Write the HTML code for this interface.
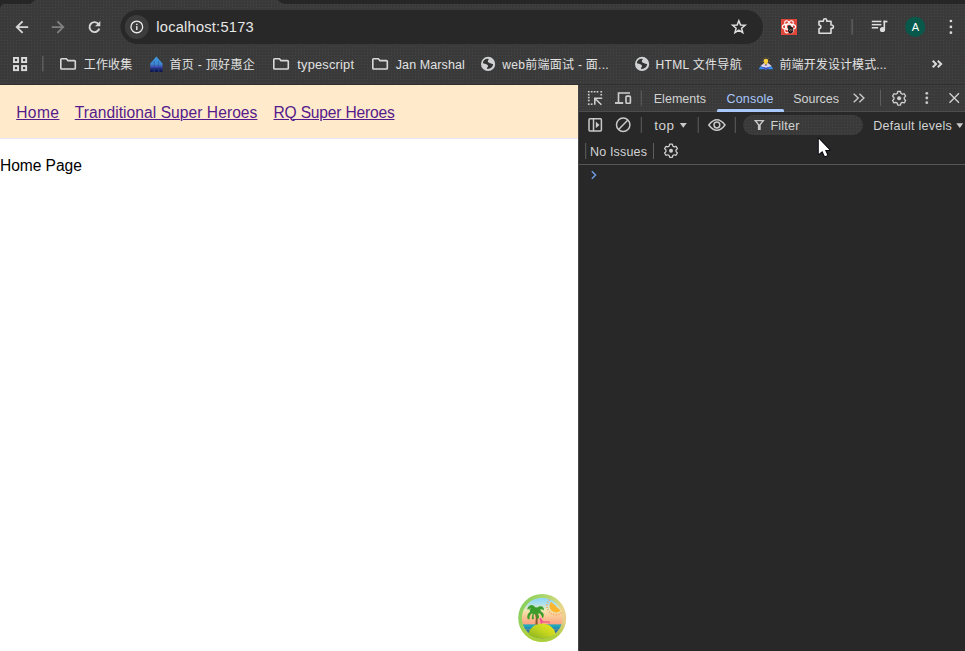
<!DOCTYPE html>
<html lang="zh-CN">
<head>
<meta charset="utf-8">
<title>localhost:5173</title>
<style>
*{box-sizing:border-box;margin:0;padding:0}
html,body{width:965px;height:651px;overflow:hidden;background:#3c3c3c;font-family:"Liberation Sans","Noto Sans CJK SC",sans-serif}
#root{position:relative;width:965px;height:651px;overflow:hidden;background:#3c3c3c}
#root>*{position:absolute}
.t{line-height:20px;white-space:nowrap;display:block}
a.lnk{text-decoration:underline;text-decoration-thickness:1px;text-underline-offset:1.2px;cursor:pointer}
#bg{left:0;top:0;width:965px;height:651px}

</style>
</head>
<body>
<div id="root">
<svg id="bg" width="965" height="651" viewBox="0 0 965 651">
  <defs>
    <linearGradient id="sky" x1="0" y1="0" x2="0" y2="1">
      <stop offset="0" stop-color="#8dd4f6"/>
      <stop offset="0.14" stop-color="#a9dff0"/>
      <stop offset="0.3" stop-color="#eee9b8"/>
      <stop offset="0.45" stop-color="#fbcb97"/>
      <stop offset="0.62" stop-color="#fba785"/>
      <stop offset="1" stop-color="#f79a84"/>
    </linearGradient>
    <linearGradient id="ring" x1="0" y1="0.3" x2="1" y2="0.7">
      <stop offset="0" stop-color="#86cf5a"/>
      <stop offset="0.5" stop-color="#b9d86f"/>
      <stop offset="0.8" stop-color="#ecd58c"/>
      <stop offset="1" stop-color="#e9c88a"/>
    </linearGradient>
    <linearGradient id="ringb" x1="0" y1="0" x2="0" y2="1">
      <stop offset="0" stop-color="#a6d24a" stop-opacity="0"/>
      <stop offset="0.55" stop-color="#a6d24a" stop-opacity="0"/>
      <stop offset="0.85" stop-color="#a9cf38" stop-opacity="0.900"/>
      <stop offset="1" stop-color="#a9cf38" stop-opacity="1"/>
    </linearGradient>
    <linearGradient id="isl" x1="1" y1="0" x2="0" y2="1">
      <stop offset="0" stop-color="#f0ea1e"/>
      <stop offset="0.5" stop-color="#c3d41f"/>
      <stop offset="1" stop-color="#7fb022"/>
    </linearGradient>
    <linearGradient id="fav1" x1="0" y1="0" x2="0" y2="1">
      <stop offset="0" stop-color="#3f9be0"/>
      <stop offset="0.5" stop-color="#3f86d2"/>
      <stop offset="0.64" stop-color="#3a5fb4"/>
      <stop offset="0.7" stop-color="#4740bd"/>
      <stop offset="0.78" stop-color="#1f3275"/>
      <stop offset="1" stop-color="#162560"/>
    </linearGradient>
    <pattern id="dz" x="0" y="0" width="3" height="3" patternUnits="userSpaceOnUse">
      <rect x="0" y="0" width="3" height="3" fill="#3a3a3a"/>
      <rect x="1" y="1" width="1" height="1" fill="#444646" shape-rendering="crispEdges"/>
    </pattern>
    <clipPath id="inner"><circle cx="542.2" cy="618" r="20.3"/></clipPath>
  </defs>

  <!-- ===== browser chrome backgrounds ===== -->
  <rect x="0" y="0" width="965" height="85" fill="url(#dz)"/>
  <!-- tab strip remnants -->
  <path d="M0 0 H36 C33 0.5 32.5 3 30 4 H4 C2 4 0.5 6 0 9 Z" fill="#262626"/>
  <path d="M277 0 H965 V4 H285 C282 4 280 1 277 0 Z" fill="#262626"/>
  <!-- url bar -->
  <rect x="120.5" y="10" width="642.5" height="34" rx="17" fill="#282828"/>
  <circle cx="136.8" cy="27" r="12" fill="#3c3c3c"/>
  <!-- toolbar/content divider -->
  <rect x="0" y="84" width="965" height="1" fill="#303030"/>

  <!-- ===== page ===== -->
  <rect x="0" y="85" width="578" height="566" fill="#ffffff"/>
  <rect x="0" y="85" width="578" height="53" fill="#ffeacc"/>
  <rect x="0" y="138" width="578" height="1" fill="#ebe6f7"/>

  <!-- ===== devtools ===== -->
  <rect x="578" y="85" width="387" height="566" fill="#282828"/>
  <rect x="578" y="85" width="387" height="26" fill="url(#dz)"/>
  <rect x="578" y="111" width="387" height="1" fill="#4d4d4d"/>
  <rect x="578" y="164" width="387" height="1" fill="#565656"/>
  <rect x="578" y="85" width="1" height="566" fill="#44474a"/>
  <!-- active tab underline -->
  <path d="M717 112 V110.5 Q717 109 718.5 109 H782.500 Q784 109 784 110.500 V112 Z" fill="#a8c7fa"/>
  <!-- filter pill -->
  <rect x="743" y="115" width="120" height="20" rx="10" fill="url(#dz)"/>

  <!-- ===== toolbar icons ===== -->
  <g fill="none" stroke="#d6d6d6" stroke-width="1.9" stroke-linecap="butt" stroke-linejoin="miter">
    <path d="M28.200 27.100 H17.800 M22.600 21.300 L16.800 27.100 L22.600 32.900"/>
  </g>
  <g fill="none" stroke="#808080" stroke-width="1.9">
    <path d="M51.800 27.100 H62.200 M57.400 21.300 L63.200 27.100 L57.400 32.900"/>
  </g>
  <!-- reload -->
  <g fill="none" stroke="#d6d6d6" stroke-width="1.9">
    <path d="M98.600 24.200 A5 5 0 1 0 99.300 28.600"/>
  </g>
  <path d="M100.300 21 V26.300 H95 Z" fill="#d6d6d6"/>
  <!-- info -->
  <circle cx="136.800" cy="26.900" r="5.850" fill="none" stroke="#ececec" stroke-width="1.300"/>
  <rect x="136.100" y="26.100" width="1.400" height="3.900" fill="#ececec"/>
  <rect x="136.100" y="23.700" width="1.400" height="1.400" fill="#ececec"/>
  <!-- star -->
  <path d="M738.85 20.70 L740.53 24.99 L745.13 25.26 L741.56 28.18 L742.73 32.64 L738.85 30.15 L734.97 32.64 L736.14 28.18 L732.57 25.26 L737.17 24.99 Z" fill="none" stroke="#e0e0e0" stroke-width="1.500" stroke-linejoin="miter"/>
  <!-- red extension -->
  <rect x="781" y="19" width="16" height="16" fill="#e0473a"/>
  <g fill="none" stroke="#ffffff" stroke-width="1.100">
    <ellipse cx="789" cy="26.800" rx="6.700" ry="2.700"/>
    <ellipse cx="789" cy="26.800" rx="6.700" ry="2.700" transform="rotate(60 789 26.800)"/>
    <ellipse cx="789" cy="26.800" rx="6.700" ry="2.700" transform="rotate(-60 789 26.800)"/>
  </g>
  <ellipse cx="790.600" cy="30" rx="2.700" ry="3.400" fill="#1d1414"/>
  <circle cx="789.300" cy="26.800" r="1.600" fill="#14322c"/>
  <path d="M788.600 29.300 L790.400 31.600 M790 28.600 L791.600 31 M791.600 28.800 L792.600 30.600" stroke="#e9c9c4" stroke-width="0.500"/>
  <!-- puzzle -->
  <path d="M819 21.200 H823.400 V20.500 A1.700 1.700 0 0 1 826.800 20.500 V21.200 H831 V25 H831.700 A1.700 1.700 0 0 1 831.700 28.400 H831 V33.200 H819 V28.700 A1.850 1.850 0 0 0 819 25 Z" fill="none" stroke="#dedede" stroke-width="1.600" stroke-linejoin="round"/>
  <!-- separator -->
  <rect x="851.500" y="19" width="1.300" height="15.500" fill="#626262"/>
  <!-- media -->
  <g fill="#dedede">
    <rect x="871.800" y="20.700" width="9.600" height="1.500"/>
    <rect x="871.800" y="23.900" width="9.600" height="1.500"/>
    <rect x="871.800" y="27" width="6.400" height="1.500"/>
    <rect x="883.500" y="20.700" width="1.600" height="9"/>
    <rect x="883.500" y="20.700" width="3.900" height="1.700"/>
    <circle cx="882.500" cy="29.500" r="2.600"/>
  </g>
  <!-- avatar -->
  <circle cx="915.200" cy="26.900" r="10.100" fill="#08594b"/>
  <!-- kebab -->
  <g fill="#dcdcdc">
    <circle cx="950.900" cy="21" r="1.350"/>
    <circle cx="950.900" cy="26.900" r="1.350"/>
    <circle cx="950.900" cy="32.700" r="1.350"/>
  </g>

  <!-- ===== bookmarks bar icons ===== -->
  <g fill="none" stroke="#dadada" stroke-width="1.900">
    <rect x="13.950" y="57.950" width="4.100" height="4.100"/>
    <rect x="22.050" y="57.950" width="4.100" height="4.100"/>
    <rect x="13.950" y="66.050" width="4.100" height="4.100"/>
    <rect x="22.050" y="66.050" width="4.100" height="4.100"/>
  </g>
  <rect x="42.200" y="56" width="1.300" height="15.500" fill="#636363"/>
  <g fill="none" stroke="#d8d8d8" stroke-width="1.600" stroke-linejoin="round">
    <path id="folder" d="M60.800 59.600 Q60.800 58.800 61.600 58.800 H66.300 L68 60.600 H74.500 Q75.300 60.600 75.300 61.400 V68.200 Q75.300 69 74.500 69 H61.600 Q60.800 69 60.800 68.200 Z"/>
    <path d="M60.800 59.600 Q60.800 58.800 61.600 58.800 H66.300 L68 60.600 H74.500 Q75.300 60.600 75.300 61.400 V68.200 Q75.300 69 74.500 69 H61.600 Q60.800 69 60.800 68.200 Z" transform="translate(213 0)"/>
    <path d="M60.800 59.600 Q60.800 58.800 61.600 58.800 H66.300 L68 60.600 H74.500 Q75.300 60.600 75.300 61.400 V68.200 Q75.300 69 74.500 69 H61.600 Q60.800 69 60.800 68.200 Z" transform="translate(312 0)"/>
  </g>
  <!-- blue favicon -->
  <path d="M156.400 56.400 L162.500 63.600 V71.800 H150.300 V63.600 Z" fill="url(#fav1)"/>
  <path d="M154.300 61 V71.800 M158.500 61 V71.800" stroke="#23407f" stroke-width="0.700" opacity="0.600"/>
  <rect x="150.300" y="70.200" width="2.600" height="1.600" fill="#0e1250"/><rect x="155.100" y="70.200" width="2.600" height="1.600" fill="#0e1250"/><rect x="159.900" y="70.200" width="2.600" height="1.600" fill="#0e1250"/>
  <!-- globes -->
  <g id="globe1">
    <circle cx="488.100" cy="63.900" r="7.100" fill="#cfd1d3"/>
    <path d="M482.900 63.300 Q483 59.600 487.300 58.800 L489 59.100 Q486.900 61.300 488.500 62.600 Q490.800 63.900 493.200 64.200 Q492.600 68.300 487.600 69 Q486.200 68.500 487.900 66.700 Q488.600 65.100 486.900 64.400 Q485 63.600 482.900 63.300 Z" fill="#333333"/>
  </g>
  <g transform="translate(154 0)">
    <circle cx="488.100" cy="63.900" r="7.100" fill="#cfd1d3"/>
    <path d="M482.900 63.300 Q483 59.600 487.300 58.800 L489 59.100 Q486.900 61.300 488.500 62.600 Q490.800 63.900 493.200 64.200 Q492.600 68.300 487.600 69 Q486.200 68.500 487.900 66.700 Q488.600 65.100 486.900 64.400 Q485 63.600 482.900 63.300 Z" fill="#333333"/>
  </g>
  <!-- bulb/book favicon -->
  <g>
    <path d="M758.800 69.300 L760 66.800 H772 L773.200 69.300 L767 69.300 L766 69.900 L765 69.300 Z" fill="#2f8df2"/>
    <path d="M760.300 66.300 L764.300 62.800 L766 64.800 L767.700 62.800 L771.900 66.300 L766.800 67.600 L766 68.600 L765.200 67.600 Z" fill="#d9d4ec"/>
    <path d="M761.500 67.300 L765.500 67.600 L766 68.600 L766.500 67.600 L770.500 67.300 L766 69.600 Z" fill="#4a46b5"/>
    <circle cx="765.900" cy="61.100" r="2.350" fill="#fcd13c"/>
    <rect x="764.700" y="62.500" width="2.400" height="2.200" rx="0.500" fill="#f8c630"/>
    <rect x="765" y="64.600" width="1.800" height="0.900" fill="#34358a"/>
    <g stroke="#e59a32" stroke-width="0.700" opacity="0.800"><path d="M762.200 61.400 H763 M768.900 61.400 H769.700 M763.200 58.400 L763.700 59 M768.600 58.400 L768.100 59 M765.900 57.300 V57.900"/></g>
  </g>
  <!-- chevrons -->
  <path d="M932.700 60.700 L936.100 64 L932.700 67.300 M937.800 60.700 L941.200 64 L937.800 67.300" fill="none" stroke="#dcdcdc" stroke-width="1.900"/>

  <!-- ===== devtools icons ===== -->
  <!-- inspect -->
  <g fill="#cfcfcf"><rect x="587.9" y="91" width="1.700" height="1.500"/><rect x="590.8" y="91" width="1.700" height="1.500"/><rect x="593.7" y="91" width="1.700" height="1.500"/><rect x="596.6" y="91" width="1.700" height="1.500"/><rect x="600.4" y="91" width="1.700" height="1.500"/><rect x="587.900" y="93.9" width="1.700" height="1.600"/><rect x="587.900" y="96.8" width="1.700" height="1.600"/><rect x="587.900" y="99.7" width="1.700" height="1.600"/><rect x="587.900" y="103.4" width="1.700" height="1.600"/><rect x="600.400" y="93.900" width="1.700" height="1.600"/><rect x="590.800" y="103.400" width="1.700" height="1.600"/></g>
  <path d="M602.200 98.300 H594.800 V104.800 M595 98.500 L601.400 104.800" fill="none" stroke="#cfcfcf" stroke-width="1.600"/>
  <!-- device -->
  <g fill="none" stroke="#cfcfcf" stroke-width="1.600">
    <path d="M618.500 102.200 V93 H630"/>
    <path d="M615 103 H623.200" stroke-width="1.900"/>
    <rect x="626" y="96.100" width="4.400" height="7.200" rx="0.900"/>
  </g>
  <rect x="640.800" y="90.300" width="1" height="15.400" fill="#5e5e5e"/>
  <path d="M853.700 93.800 L858.200 98 L853.700 102.200 M859.400 93.800 L863.900 98 L859.400 102.200" fill="none" stroke="#c9c9c9" stroke-width="1.400"/>
  <rect x="880" y="89.800" width="1" height="16" fill="#5e5e5e"/>
  <!-- gear top -->
  <g id="gear1" transform="translate(899.100 98.300) scale(0.920)">
    <path d="M-1.500 -7.400 H1.500 L2 -5.300 L3.600 -4.400 L5.600 -5 L7.100 -2.400 L5.600 -0.900 V0.900 L7.100 2.400 L5.600 5 L3.600 4.400 L2 5.300 L1.500 7.400 H-1.500 L-2 5.300 L-3.600 4.400 L-5.600 5 L-7.100 2.400 L-5.600 0.900 V-0.900 L-7.100 -2.400 L-5.600 -5 L-3.600 -4.400 L-2 -5.300 Z" fill="none" stroke="#d0d0d0" stroke-width="1.400" stroke-linejoin="round"/>
    <circle r="2.200" fill="#d0d0d0"/>
  </g>
  <g fill="#c9c9c9">
    <circle cx="926.800" cy="93.300" r="1.400"/>
    <circle cx="926.800" cy="98" r="1.400"/>
    <circle cx="926.800" cy="102.700" r="1.400"/>
  </g>
  <path d="M949.500 93.300 L959 102.800 M959 93.300 L949.500 102.800" stroke="#d0d0d0" stroke-width="1.400" fill="none"/>

  <!-- console toolbar row -->
  <g fill="none" stroke="#c9c9c9" stroke-width="1.500">
    <rect x="589" y="118.700" width="12.400" height="12.400" rx="1"/>
    <path d="M593.500 118.700 V131.100"/>
  </g>
  <path d="M595.800 121.500 L599.500 124.900 L595.800 128.300 Z" fill="#c9c9c9"/>
  <g fill="none" stroke="#c9c9c9" stroke-width="1.500">
    <circle cx="623.200" cy="124.800" r="6.700"/>
    <path d="M618.600 129.600 L627.900 120.100"/>
  </g>
  <rect x="640.800" y="117" width="1" height="16" fill="#5e5e5e"/>
  <path d="M679.800 123 H686.800 L683.300 127.800 Z" fill="#c9c9c9"/>
  <rect x="697.700" y="117" width="1" height="16" fill="#5e5e5e"/>
  <!-- eye -->
  <path d="M708.800 125 Q716.900 114.500 725 125 Q716.900 135.500 708.800 125 Z" fill="none" stroke="#c9c9c9" stroke-width="1.500"/>
  <circle cx="716.900" cy="125" r="2.900" fill="none" stroke="#c9c9c9" stroke-width="1.500"/>
  <rect x="734.800" y="117" width="1" height="16" fill="#5e5e5e"/>
  <!-- funnel -->
  <path d="M755.300 120.600 H763.300 L760 124.800 V129.400 H758.600 V124.800 Z" fill="none" stroke="#c9c9c9" stroke-width="1.400" stroke-linejoin="miter"/>
  <path d="M956.300 123.300 H963.200 L959.750 127.900 Z" fill="#c9c9c9"/>

  <!-- issues row -->
  <rect x="585.200" y="143" width="1" height="16" fill="#5e5e5e"/>
  <rect x="653" y="143" width="1" height="16" fill="#5e5e5e"/>
  <g transform="translate(671 150.800) scale(0.900)">
    <path d="M-1.500 -7.400 H1.500 L2 -5.300 L3.600 -4.400 L5.600 -5 L7.100 -2.400 L5.600 -0.900 V0.900 L7.100 2.400 L5.600 5 L3.600 4.400 L2 5.300 L1.500 7.400 H-1.500 L-2 5.300 L-3.600 4.400 L-5.600 5 L-7.100 2.400 L-5.600 0.900 V-0.900 L-7.100 -2.400 L-5.600 -5 L-3.600 -4.400 L-2 -5.300 Z" fill="none" stroke="#d0d0d0" stroke-width="1.400" stroke-linejoin="round"/>
    <circle r="2.200" fill="#d0d0d0"/>
  </g>
  <!-- prompt -->
  <path d="M591.800 171.300 L595.600 175 L591.800 178.700" fill="none" stroke="#6f9fe8" stroke-width="1.400"/>
  <!-- mouse cursor -->
  <path d="M818.800 138.800 V154.100 L822.400 151 L824.800 156.300 L827.400 155.200 L825 150 H829.500 Z" fill="#ffffff" stroke="#06060f" stroke-width="1.900" stroke-linejoin="round" paint-order="stroke"/>

  <!-- ===== floating island icon ===== -->
  <g>
    <circle cx="542.200" cy="618" r="24" fill="url(#ring)"/>
    <circle cx="542.200" cy="618" r="24" fill="url(#ringb)"/>
    <circle cx="542.200" cy="618" r="20.300" fill="url(#sky)"/>
    <g clip-path="url(#inner)">
      <rect x="520" y="624.400" width="45" height="2.600" fill="#22a7b8"/>
      <rect x="520" y="627" width="45" height="2.600" fill="#2490b4"/>
      <rect x="520" y="629.600" width="45" height="2.800" fill="#2a78a6"/>
      <rect x="520" y="632.400" width="45" height="8" fill="#3a6a9a"/>
      <!-- sun -->
      <g>
        <path d="M551.200 601.800 A6.200 6.200 0 0 0 560.600 610.400 Z" fill="#fbb62d"/>
        <path d="M549.500 599.800 A8.600 8.600 0 0 0 562.400 612" fill="none" stroke="#f7a05a" stroke-width="2" stroke-dasharray="0.900 1.650"/>
      </g>
    </g>
    <!-- island -->
    <path d="M528.600 634 Q530 624.200 542 623.600 Q554 624.200 555.300 634 Q549 638.600 542 638.300 Q535 638.600 528.600 634 Z" fill="url(#isl)"/>
    <!-- chair -->
    <path d="M539.400 618.300 L541 618 L542.800 621.200 L549.600 621.600 L549.800 623.600 L548.800 623.600 L548.600 622.600 L542.400 622.600 L541.800 623.800 L540.800 623.600 Z" fill="#ef4f8b"/>
    <!-- palm trunk -->
    <path d="M535.400 624.600 Q536.600 618 534.600 611.500 L536.200 611 Q538.400 618 537.600 624.300 Z" fill="#8a5a2a"/>
    <!-- palm leaves -->
    <g fill="#3c9d2b">
      <path d="M535.300 611.800 Q531 606.500 526.800 609.500 Q531.500 608.800 535.300 611.800 Z"/>
      <path d="M535.300 611.500 Q528.500 610 527.300 616 Q526.800 619.500 529.500 619.500 Q529 613.500 535.300 611.500 Z"/>
      <path d="M535.500 611.300 Q536 605.500 531.500 605 Q527.800 605.800 527.300 609.300 Q531.300 606.800 535.500 611.300 Z"/>
      <path d="M535.500 611.300 Q537.500 605 542.300 606.500 Q544.500 608 543.800 610.500 Q540.300 607.500 535.500 611.300 Z"/>
      <path d="M535.500 611.500 Q542 609.500 543.800 614.500 Q544 617.500 542.300 618.300 Q541.800 613 535.500 611.500 Z"/>
      <path d="M535.300 611.500 Q539.500 613.500 539 618.300 Q537 619.500 536.300 617.800 Q537.500 614 535.300 611.500 Z"/>
      <path d="M535.300 611.500 Q531.300 613.500 531.800 619 Q533.300 619.800 534 618.300 Q532.800 614.500 535.300 611.500 Z"/>
      <ellipse cx="535.300" cy="610.800" rx="5.500" ry="3.600"/>
    </g>
  </g>
</svg>

<span id="url" class="t" style="left:156.30px;top:16.98px;font-size:14.7px;color:#e6e6e6;letter-spacing:0.204px">localhost:5173</span>
<span id="bm1" class="t" style="left:83.75px;top:55.14px;font-size:12px;color:#e2e2e2;letter-spacing:0.131px">工作收集</span>
<span id="bm2" class="t" style="left:169.50px;top:55.14px;font-size:12px;color:#e2e2e2;letter-spacing:0.321px">首页 - 顶好惠企</span>
<span id="bm3" class="t" style="left:297.25px;top:54.54px;font-size:12.8px;color:#e2e2e2;letter-spacing:0.223px">typescript</span>
<span id="bm4" class="t" style="left:395.75px;top:54.54px;font-size:12.5px;color:#e2e2e2;letter-spacing:0.100px">Jan Marshal</span>
<span id="bm5" class="t" style="left:502.25px;top:55.14px;font-size:12px;color:#e2e2e2;letter-spacing:0.290px">web前端面试 - 面...</span>
<span id="bm6" class="t" style="left:655.50px;top:55.14px;font-size:12px;color:#e2e2e2;letter-spacing:0.322px">HTML 文件导航</span>
<span id="bm7" class="t" style="left:779.50px;top:55.14px;font-size:12px;color:#e2e2e2;letter-spacing:0.100px">前端开发设计模式...</span>
<a id="n1" href="#" class="t lnk" style="left:16.20px;top:102.53px;font-size:15.6px;color:#551a8b;letter-spacing:0.416px">Home</a>
<a id="n2" href="#" class="t lnk" style="left:74.80px;top:102.53px;font-size:15.6px;color:#551a8b;letter-spacing:0.047px">Tranditional Super Heroes</a>
<a id="n3" href="#" class="t lnk" style="left:273.50px;top:102.53px;font-size:15.6px;color:#551a8b;letter-spacing:-0.196px">RQ Super Heroes</a>
<span id="hp" class="t" style="left:0.00px;top:155.93px;font-size:15.6px;color:#000;letter-spacing:-0.063px">Home Page</span>
<span id="d1" class="t" style="left:653.75px;top:88.67px;font-size:12.5px;color:#d2d2d2;letter-spacing:0.024px">Elements</span>
<span id="d2" class="t" style="left:726.50px;top:88.67px;font-size:12.5px;color:#a8c7fa;letter-spacing:0.194px">Console</span>
<span id="d3" class="t" style="left:793.25px;top:88.67px;font-size:12.5px;color:#d2d2d2;letter-spacing:-0.009px">Sources</span>
<span id="d4" class="t" style="left:654.25px;top:116.47px;font-size:13.5px;color:#d2d2d2;letter-spacing:0.450px">top</span>
<span id="d5" class="t" style="left:770.50px;top:116.47px;font-size:12.5px;color:#d2d2d2;letter-spacing:0.210px">Filter</span>
<span id="d6" class="t" style="left:873.25px;top:116.47px;font-size:12.5px;color:#d2d2d2;letter-spacing:0.261px">Default levels</span>
<span id="d7" class="t" style="left:590.00px;top:141.77px;font-size:12.5px;color:#d2d2d2;letter-spacing:0.167px">No Issues</span>
<span id="av" class="t" style="left:911.75px;top:17.09px;font-size:11px;color:#ffffff;letter-spacing:0.000px">A</span>
</div>
</body>
</html>
